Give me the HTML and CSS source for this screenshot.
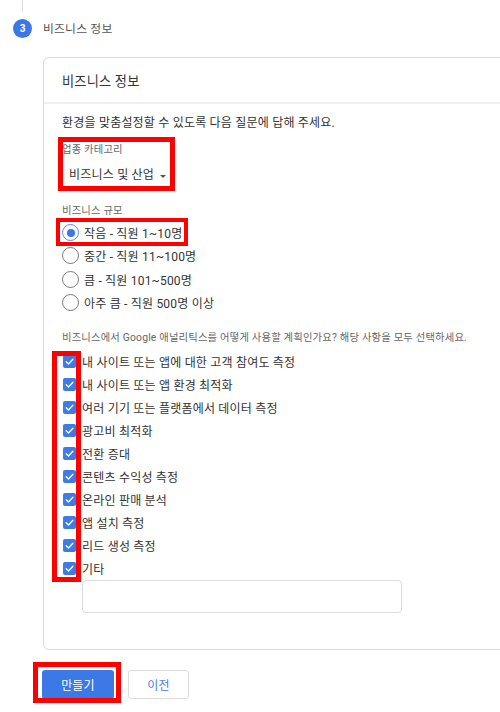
FILE: index.html
```html
<!DOCTYPE html>
<html lang="ko">
<head>
<meta charset="utf-8">
<title>비즈니스 정보</title>
<link rel="stylesheet" href="styles.css">
</head>
<body>
<div class="rail"></div>
<div class="step">
  <div class="step-num">3</div>
  <div class="step-title">비즈니스 정보</div>
</div>
<div class="card">
  <div class="card-head">비즈니스 정보</div>
  <div class="card-body">
    <div class="intro">환경을 맞춤설정할 수 있도록 다음 질문에 답해 주세요.</div>
    <div class="field-label cat-label">업종 카테고리</div>
    <div class="select">비즈니스 및 산업<span class="caret"></span></div>
    <div class="field-label size-label">비즈니스 규모</div>
    <div class="radios">
      <div class="radio-row"><span class="radio on"></span><span>작음 - 직원 1~10명</span></div>
      <div class="radio-row"><span class="radio"></span><span>중간 - 직원 11~100명</span></div>
      <div class="radio-row"><span class="radio"></span><span>큼 - 직원 101~500명</span></div>
      <div class="radio-row"><span class="radio"></span><span>아주 큼 - 직원 500명 이상</span></div>
    </div>
    <div class="field-label question">비즈니스에서 Google 애널리틱스를 어떻게 사용할 계획인가요? 해당 사항을 모두 선택하세요.</div>
    <div class="checks">
      <div class="check-row"><span class="box"><svg viewBox="0 0 13 13"><path d="M3.2 6.8 L5.5 9 L9.9 4.3"/></svg></span><span>내 사이트 또는 앱에 대한 고객 참여도 측정</span></div>
      <div class="check-row"><span class="box"><svg viewBox="0 0 13 13"><path d="M3.2 6.8 L5.5 9 L9.9 4.3"/></svg></span><span>내 사이트 또는 앱 환경 최적화</span></div>
      <div class="check-row"><span class="box"><svg viewBox="0 0 13 13"><path d="M3.2 6.8 L5.5 9 L9.9 4.3"/></svg></span><span>여러 기기 또는 플랫폼에서 데이터 측정</span></div>
      <div class="check-row"><span class="box"><svg viewBox="0 0 13 13"><path d="M3.2 6.8 L5.5 9 L9.9 4.3"/></svg></span><span>광고비 최적화</span></div>
      <div class="check-row"><span class="box"><svg viewBox="0 0 13 13"><path d="M3.2 6.8 L5.5 9 L9.9 4.3"/></svg></span><span>전환 증대</span></div>
      <div class="check-row"><span class="box"><svg viewBox="0 0 13 13"><path d="M3.2 6.8 L5.5 9 L9.9 4.3"/></svg></span><span>콘텐츠 수익성 측정</span></div>
      <div class="check-row"><span class="box"><svg viewBox="0 0 13 13"><path d="M3.2 6.8 L5.5 9 L9.9 4.3"/></svg></span><span>온라인 판매 분석</span></div>
      <div class="check-row"><span class="box"><svg viewBox="0 0 13 13"><path d="M3.2 6.8 L5.5 9 L9.9 4.3"/></svg></span><span>앱 설치 측정</span></div>
      <div class="check-row"><span class="box"><svg viewBox="0 0 13 13"><path d="M3.2 6.8 L5.5 9 L9.9 4.3"/></svg></span><span>리드 생성 측정</span></div>
      <div class="check-row"><span class="box"><svg viewBox="0 0 13 13"><path d="M3.2 6.8 L5.5 9 L9.9 4.3"/></svg></span><span>기타</span></div>
    </div>
    <div class="other-input"></div>
  </div>
</div>
<div class="actions">
  <button class="btn primary">만들기</button>
  <button class="btn secondary">이전</button>
</div>

<div class="mark mark-cat"></div>
<div class="mark mark-size"></div>
<div class="mark mark-checks"></div>
<div class="mark mark-btn"></div>
</body>
</html>
```
FILE: styles.css
```css
* { box-sizing: border-box; }
html, body { margin: 0; padding: 0; }
body {
  width: 500px;
  height: 712px;
  overflow: hidden;
  position: relative;
  background: #fff;
  color: #3a3a3a;
  font-family: Roboto, "Noto Sans CJK KR", "Noto Sans", sans-serif;
  letter-spacing: 0.2px;
}

.rail { width: 1px; height: 11px; background: #dcdcdc; margin-left: 22px; }

.step { display: flex; align-items: center; height: 19px; margin-top: 8px; padding-left: 13px; }
.step-num {
  width: 19px; height: 19px; border-radius: 50%;
  background: #3b78e5; color: #fff;
  font-size: 10px; font-weight: 700; letter-spacing: 0;
  display: flex; align-items: center; justify-content: center;
}
.step-title { margin-left: 11px; margin-bottom: 2px; font-size: 11.8px; color: #555; }

.card {
  margin: 19px 0 0 43px;
  width: 480px;
  border: 1px solid #dcdcdc;
  border-radius: 6px;
}
.card-head {
  height: 46px;
  padding-left: 18px;
  display: flex; align-items: center;
  font-size: 13.2px; color: #333;
  border-bottom: 2px solid #efefef;
}
.card-body { padding: 11px 0 36px 18px; }

.intro { font-size: 12px; line-height: 17px; color: #333; }

.field-label { font-size: 10.3px; line-height: 14px; color: #666; }
.cat-label { margin-top: 11px; }
.select {
  margin-top: 9.5px; margin-left: 7px;
  font-size: 12px; line-height: 17px; color: #333;
  display: flex; align-items: center;
}
.caret {
  width: 0; height: 0; margin-left: 6px; margin-top: 2px;
  border-left: 3px solid transparent;
  border-right: 3px solid transparent;
  border-top: 3px solid #555;
}

.size-label { margin-top: 20px; }
.radios { margin-top: 3.5px; }
.radio-row {
  height: 23.33px;
  display: flex; align-items: center;
  font-size: 12px; color: #333;
}
.radio {
  width: 17px; height: 17px; border-radius: 50%;
  border: 1.5px solid #7a7a7a;
  margin-right: 5px;
  display: flex; align-items: center; justify-content: center;
  flex: none;
}
.radio.on { border-color: #5b8ce6; }
.radio.on::after {
  content: ""; width: 8px; height: 8px; border-radius: 50%; background: #3b78e5;
}

.question { margin-top: 16.7px; }
.checks { margin-top: 4.5px; }
.check-row {
  height: 23px;
  display: flex; align-items: center;
  font-size: 12px; color: #333;
}
.box {
  width: 13px; height: 13px; margin-left: 1px; margin-right: 6px;
  background: #3d7be5; border-radius: 2px; flex: none;
  display: flex;
}
.box svg { width: 13px; height: 13px; }
.box path { fill: none; stroke: #fff; stroke-width: 1.3; stroke-linecap: round; stroke-linejoin: round; }

.other-input {
  margin-left: 20px;
  width: 320px; height: 33px;
  border: 1px solid #dcdcdc; border-radius: 4px;
}

.actions { display: flex; gap: 14px; margin: 20px 0 0 42px; }
.btn {
  height: 29px; border-radius: 3px;
  font-family: Roboto, "Noto Sans CJK KR", sans-serif;
  font-size: 12px; letter-spacing: 0.2px; padding: 0;
}
.primary { width: 72px; background: #3c78e6; border: none; color: #fff; }
.secondary { width: 61px; background: #fff; border: 1px solid #dcdcdc; color: #4a7de6; }

.mark { position: absolute; border: 5px solid #ff0000; }
.mark-cat { left: 58px; top: 137px; width: 117px; height: 54px; }
.mark-size { left: 56px; top: 218px; width: 132px; height: 28px; border-width: 4.5px; }
.mark-checks { left: 52px; top: 351px; width: 29px; height: 231px; }
.mark-btn { left: 33px; top: 662px; width: 88px; height: 41px; border-width: 5.5px; }
```
